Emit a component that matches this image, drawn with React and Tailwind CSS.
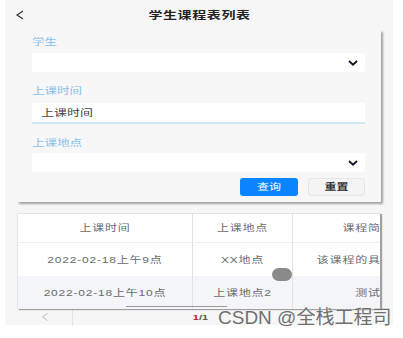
import React from 'react';

const font = { fontFamily: '"Liberation Sans", "Noto Sans CJK SC", sans-serif' };

// знімок стиснутий по вертикалі, тож текст теж трохи сплющуємо
function Squash({ children, className = '' }) {
    return <span className={`inline-block scale-y-[0.72] ${className}`}>{children}</span>;
}

function Chevron() {
    return (
        <svg width="10" height="6" viewBox="0 0 10 6" className="text-gray-900">
            <path d="M1 1 L5 4.6 L9 1" fill="none" stroke="currentColor" strokeWidth="1.9" />
        </svg>
    );
}

function Label({ children }) {
    return <div className="text-[12.5px] leading-[14px] text-[#82c2ec]"><Squash>{children}</Squash></div>;
}

function SelectBox() {
    return (
        <div className="h-[19px] bg-white rounded-[3px] flex items-center justify-end pr-[7px]">
            <Chevron />
        </div>
    );
}

const rows = [
    ['2022-02-18上午9点', 'XX地点', '该课程的具体介绍', 'bg-white'],
    ['2022-02-18上午10点', '上课地点2', '测试', 'bg-[#f3f5f8]'],
];

export default function App() {
    return (
        <div className="w-[403px] h-[338px] bg-white relative overflow-hidden" style={font}>
            <div className="ml-[5px] w-[388px] h-[325px] bg-[#f6f6f6] flex flex-col">
                {/* Шапка */}
                <div className="h-[30px] flex items-center relative shrink-0">
                    <svg className="absolute left-[10px] top-[10px]" width="10" height="10" viewBox="0 0 10 10">
                        <path d="M8 1 L2 5 L8 9" fill="none" stroke="#333" strokeWidth="1.2" />
                    </svg>
                    <div className="flex-1 text-center text-[14px] tracking-[0.6px] font-bold text-[#222] pl-[1px]">
                        <Squash>学生课程表列表</Squash>
                    </div>
                </div>

                {/* Фільтр */}
                <div className="ml-[12px] w-[364px] h-[172px] bg-[#f7f7f7] shadow-[2px_2px_2px_rgba(0,0,0,0.35)] pl-[15px] pr-[16px] pt-[5px] flex flex-col shrink-0">
                    <Label>学生</Label>
                    <div className="mt-[4px]"><SelectBox /></div>
                    <div className="mt-[12px]"><Label>上课时间</Label></div>
                    <div className="mt-[5px] h-[21px] bg-white border-b-2 border-[#cfe6f5] flex items-center pl-[9px] text-[13px] text-[#444]">
                        <Squash>上课时间</Squash>
                    </div>
                    <div className="mt-[12px]"><Label>上课地点</Label></div>
                    <div className="mt-[3px]"><SelectBox /></div>
                    <div className="mt-[6px] flex justify-end gap-[10px]">
                        <button className="w-[58px] h-[18px] rounded-[3px] bg-[#0a84ff] text-white text-[12px] leading-[18px]"><Squash>查询</Squash></button>
                        <button className="w-[57px] h-[18px] rounded-[3px] bg-[#f4f4f4] border border-[#e6e6e6] text-[#333] text-[12px] leading-[16px] font-bold"><Squash>重置</Squash></button>
                    </div>
                </div>

                {/* Таблиця */}
                <div className="mt-[11px] ml-[12px] w-[363px] relative overflow-hidden shrink-0 border-t border-l border-[#e4e4e4] shadow-[2px_1px_1px_rgba(0,0,0,0.35)]">
                    <div className="w-[425px] text-[12px] tracking-[0.8px] text-[#6a6a6a]">
                        <div className="flex h-[29px] bg-white border-b border-[#eeeeee]">
                            <div className="w-[175px] flex items-center justify-center border-r border-[#e2e2e2]"><Squash>上课时间</Squash></div>
                            <div className="w-[100px] flex items-center justify-center border-r border-[#e2e2e2]"><Squash>上课地点</Squash></div>
                            <div className="w-[150px] flex items-center justify-center"><Squash>课程简介</Squash></div>
                        </div>
                        {rows.map(([t, p, d, bg]) => (
                            <div key={t} className={`flex h-[33px] ${bg}`}>
                                <div className="w-[175px] flex items-center justify-center border-r border-[#e2e2e2]"><Squash>{t}</Squash></div>
                                <div className="w-[100px] flex items-center justify-center border-r border-[#e2e2e2]"><Squash>{p}</Squash></div>
                                <div className="w-[150px] flex items-center justify-center whitespace-nowrap overflow-hidden"><Squash>{d}</Squash></div>
                            </div>
                        ))}
                    </div>
                    <div className="absolute left-[108px] bottom-[2px] w-[101px] h-[1px] bg-[#9a9a9a]" />
                </div>

                {/* Пагінація */}
                <div className="ml-[12px] w-[363px] h-[17px] flex items-center text-[11px]">
                    <div className="w-[56px] h-full flex items-center justify-center border-r border-[#e4e4e4]">
                        <svg width="8" height="8" viewBox="0 0 8 8">
                            <path d="M6.5 0.5 L1.5 4 L6.5 7.5" fill="none" stroke="#bbb" strokeWidth="1" />
                        </svg>
                    </div>
                    <div className="flex-1 text-center pr-[52px] font-bold">
                        <Squash><span className="text-[#c8102e]">1</span><span className="text-[#555]">/1</span></Squash>
                    </div>
                </div>
            </div>

            {/* Точка дотику */}
            <div className="absolute left-[272px] top-[268px] w-[20px] h-[13px] rounded-full bg-[#8a8a8a]" />

            {/* Водяний знак */}
            <div className="absolute left-[218px] top-[306px] text-[19px] leading-[24px] text-[#6f6f6f] whitespace-nowrap" style={{ textShadow: '0 0 1px #fff' }}>
                CSDN @全栈工程司
            </div>
        </div>
    );
}
